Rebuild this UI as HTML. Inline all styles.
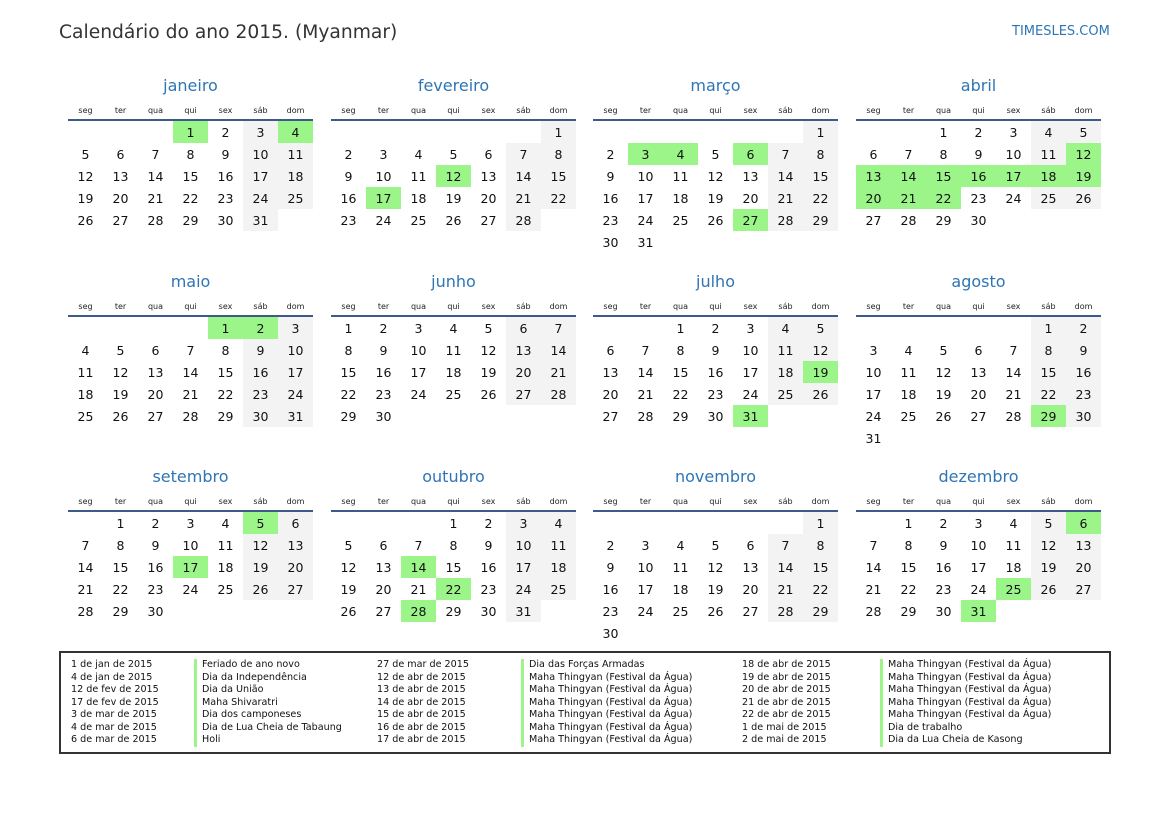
<!DOCTYPE html>
<html><head><meta charset="utf-8"><style>
body{margin:0;width:1169px;height:827px;background:#fff;font-family:"DejaVu Sans","Liberation Sans",sans-serif;position:relative;overflow:hidden;color:#111}
.t{position:absolute;left:59px;top:22px;font-size:18.7px;color:#333;white-space:nowrap}
.s{position:absolute;left:1012px;top:24px;font-size:13px;color:#2e75b6}
.m{position:absolute;width:245px}
.m h2{margin:0;height:22px;line-height:22px;font-size:16px;font-weight:normal;color:#2e75b6;text-align:center;position:absolute;top:1px;left:0;width:245px}
.m table{position:absolute;top:27px;left:0;border-collapse:collapse;table-layout:fixed;width:245px}
.m th{height:18px;font-size:8px;font-weight:normal;color:#222;padding:0;border-bottom:2px solid #3d5a8a;width:35px}
.m td{height:22px;padding:0;text-align:center;font-size:12.5px;width:35px}
.w{background:#f3f3f3}.h{background:#9cf589}
.lg{position:absolute;left:59px;top:651px;width:1048px;height:99px;border:2px solid #333}
.c{position:absolute;top:6px;font-size:9.6px;line-height:12.5px;white-space:nowrap;color:#111}
.b{border-left:3px solid #9cf589;padding-left:5px}
</style></head><body>
<div class="t">Calendário do ano 2015. (Myanmar)</div>
<div class="s">TIMESLES.COM</div>

<div class="m" style="left:68px;top:74px"><h2>janeiro</h2><table><tr><th>seg</th><th>ter</th><th>qua</th><th>qui</th><th>sex</th><th>sáb</th><th>dom</th></tr>
<tr><td></td><td></td><td></td><td class="h">1</td><td>2</td><td class="w">3</td><td class="h">4</td></tr>
<tr><td>5</td><td>6</td><td>7</td><td>8</td><td>9</td><td class="w">10</td><td class="w">11</td></tr>
<tr><td>12</td><td>13</td><td>14</td><td>15</td><td>16</td><td class="w">17</td><td class="w">18</td></tr>
<tr><td>19</td><td>20</td><td>21</td><td>22</td><td>23</td><td class="w">24</td><td class="w">25</td></tr>
<tr><td>26</td><td>27</td><td>28</td><td>29</td><td>30</td><td class="w">31</td><td></td></tr></table></div>

<div class="m" style="left:331px;top:74px"><h2>fevereiro</h2><table><tr><th>seg</th><th>ter</th><th>qua</th><th>qui</th><th>sex</th><th>sáb</th><th>dom</th></tr>
<tr><td></td><td></td><td></td><td></td><td></td><td></td><td class="w">1</td></tr>
<tr><td>2</td><td>3</td><td>4</td><td>5</td><td>6</td><td class="w">7</td><td class="w">8</td></tr>
<tr><td>9</td><td>10</td><td>11</td><td class="h">12</td><td>13</td><td class="w">14</td><td class="w">15</td></tr>
<tr><td>16</td><td class="h">17</td><td>18</td><td>19</td><td>20</td><td class="w">21</td><td class="w">22</td></tr>
<tr><td>23</td><td>24</td><td>25</td><td>26</td><td>27</td><td class="w">28</td><td></td></tr></table></div>

<div class="m" style="left:593px;top:74px"><h2>março</h2><table><tr><th>seg</th><th>ter</th><th>qua</th><th>qui</th><th>sex</th><th>sáb</th><th>dom</th></tr>
<tr><td></td><td></td><td></td><td></td><td></td><td></td><td class="w">1</td></tr>
<tr><td>2</td><td class="h">3</td><td class="h">4</td><td>5</td><td class="h">6</td><td class="w">7</td><td class="w">8</td></tr>
<tr><td>9</td><td>10</td><td>11</td><td>12</td><td>13</td><td class="w">14</td><td class="w">15</td></tr>
<tr><td>16</td><td>17</td><td>18</td><td>19</td><td>20</td><td class="w">21</td><td class="w">22</td></tr>
<tr><td>23</td><td>24</td><td>25</td><td>26</td><td class="h">27</td><td class="w">28</td><td class="w">29</td></tr>
<tr><td>30</td><td>31</td><td></td><td></td><td></td><td></td><td></td></tr></table></div>

<div class="m" style="left:856px;top:74px"><h2>abril</h2><table><tr><th>seg</th><th>ter</th><th>qua</th><th>qui</th><th>sex</th><th>sáb</th><th>dom</th></tr>
<tr><td></td><td></td><td>1</td><td>2</td><td>3</td><td class="w">4</td><td class="w">5</td></tr>
<tr><td>6</td><td>7</td><td>8</td><td>9</td><td>10</td><td class="w">11</td><td class="h">12</td></tr>
<tr><td class="h">13</td><td class="h">14</td><td class="h">15</td><td class="h">16</td><td class="h">17</td><td class="h">18</td><td class="h">19</td></tr>
<tr><td class="h">20</td><td class="h">21</td><td class="h">22</td><td>23</td><td>24</td><td class="w">25</td><td class="w">26</td></tr>
<tr><td>27</td><td>28</td><td>29</td><td>30</td><td></td><td></td><td></td></tr></table></div>

<div class="m" style="left:68px;top:270px"><h2>maio</h2><table><tr><th>seg</th><th>ter</th><th>qua</th><th>qui</th><th>sex</th><th>sáb</th><th>dom</th></tr>
<tr><td></td><td></td><td></td><td></td><td class="h">1</td><td class="h">2</td><td class="w">3</td></tr>
<tr><td>4</td><td>5</td><td>6</td><td>7</td><td>8</td><td class="w">9</td><td class="w">10</td></tr>
<tr><td>11</td><td>12</td><td>13</td><td>14</td><td>15</td><td class="w">16</td><td class="w">17</td></tr>
<tr><td>18</td><td>19</td><td>20</td><td>21</td><td>22</td><td class="w">23</td><td class="w">24</td></tr>
<tr><td>25</td><td>26</td><td>27</td><td>28</td><td>29</td><td class="w">30</td><td class="w">31</td></tr></table></div>

<div class="m" style="left:331px;top:270px"><h2>junho</h2><table><tr><th>seg</th><th>ter</th><th>qua</th><th>qui</th><th>sex</th><th>sáb</th><th>dom</th></tr>
<tr><td>1</td><td>2</td><td>3</td><td>4</td><td>5</td><td class="w">6</td><td class="w">7</td></tr>
<tr><td>8</td><td>9</td><td>10</td><td>11</td><td>12</td><td class="w">13</td><td class="w">14</td></tr>
<tr><td>15</td><td>16</td><td>17</td><td>18</td><td>19</td><td class="w">20</td><td class="w">21</td></tr>
<tr><td>22</td><td>23</td><td>24</td><td>25</td><td>26</td><td class="w">27</td><td class="w">28</td></tr>
<tr><td>29</td><td>30</td><td></td><td></td><td></td><td></td><td></td></tr></table></div>

<div class="m" style="left:593px;top:270px"><h2>julho</h2><table><tr><th>seg</th><th>ter</th><th>qua</th><th>qui</th><th>sex</th><th>sáb</th><th>dom</th></tr>
<tr><td></td><td></td><td>1</td><td>2</td><td>3</td><td class="w">4</td><td class="w">5</td></tr>
<tr><td>6</td><td>7</td><td>8</td><td>9</td><td>10</td><td class="w">11</td><td class="w">12</td></tr>
<tr><td>13</td><td>14</td><td>15</td><td>16</td><td>17</td><td class="w">18</td><td class="h">19</td></tr>
<tr><td>20</td><td>21</td><td>22</td><td>23</td><td>24</td><td class="w">25</td><td class="w">26</td></tr>
<tr><td>27</td><td>28</td><td>29</td><td>30</td><td class="h">31</td><td></td><td></td></tr></table></div>

<div class="m" style="left:856px;top:270px"><h2>agosto</h2><table><tr><th>seg</th><th>ter</th><th>qua</th><th>qui</th><th>sex</th><th>sáb</th><th>dom</th></tr>
<tr><td></td><td></td><td></td><td></td><td></td><td class="w">1</td><td class="w">2</td></tr>
<tr><td>3</td><td>4</td><td>5</td><td>6</td><td>7</td><td class="w">8</td><td class="w">9</td></tr>
<tr><td>10</td><td>11</td><td>12</td><td>13</td><td>14</td><td class="w">15</td><td class="w">16</td></tr>
<tr><td>17</td><td>18</td><td>19</td><td>20</td><td>21</td><td class="w">22</td><td class="w">23</td></tr>
<tr><td>24</td><td>25</td><td>26</td><td>27</td><td>28</td><td class="h">29</td><td class="w">30</td></tr>
<tr><td>31</td><td></td><td></td><td></td><td></td><td></td><td></td></tr></table></div>

<div class="m" style="left:68px;top:465px"><h2>setembro</h2><table><tr><th>seg</th><th>ter</th><th>qua</th><th>qui</th><th>sex</th><th>sáb</th><th>dom</th></tr>
<tr><td></td><td>1</td><td>2</td><td>3</td><td>4</td><td class="h">5</td><td class="w">6</td></tr>
<tr><td>7</td><td>8</td><td>9</td><td>10</td><td>11</td><td class="w">12</td><td class="w">13</td></tr>
<tr><td>14</td><td>15</td><td>16</td><td class="h">17</td><td>18</td><td class="w">19</td><td class="w">20</td></tr>
<tr><td>21</td><td>22</td><td>23</td><td>24</td><td>25</td><td class="w">26</td><td class="w">27</td></tr>
<tr><td>28</td><td>29</td><td>30</td><td></td><td></td><td></td><td></td></tr></table></div>

<div class="m" style="left:331px;top:465px"><h2>outubro</h2><table><tr><th>seg</th><th>ter</th><th>qua</th><th>qui</th><th>sex</th><th>sáb</th><th>dom</th></tr>
<tr><td></td><td></td><td></td><td>1</td><td>2</td><td class="w">3</td><td class="w">4</td></tr>
<tr><td>5</td><td>6</td><td>7</td><td>8</td><td>9</td><td class="w">10</td><td class="w">11</td></tr>
<tr><td>12</td><td>13</td><td class="h">14</td><td>15</td><td>16</td><td class="w">17</td><td class="w">18</td></tr>
<tr><td>19</td><td>20</td><td>21</td><td class="h">22</td><td>23</td><td class="w">24</td><td class="w">25</td></tr>
<tr><td>26</td><td>27</td><td class="h">28</td><td>29</td><td>30</td><td class="w">31</td><td></td></tr></table></div>

<div class="m" style="left:593px;top:465px"><h2>novembro</h2><table><tr><th>seg</th><th>ter</th><th>qua</th><th>qui</th><th>sex</th><th>sáb</th><th>dom</th></tr>
<tr><td></td><td></td><td></td><td></td><td></td><td></td><td class="w">1</td></tr>
<tr><td>2</td><td>3</td><td>4</td><td>5</td><td>6</td><td class="w">7</td><td class="w">8</td></tr>
<tr><td>9</td><td>10</td><td>11</td><td>12</td><td>13</td><td class="w">14</td><td class="w">15</td></tr>
<tr><td>16</td><td>17</td><td>18</td><td>19</td><td>20</td><td class="w">21</td><td class="w">22</td></tr>
<tr><td>23</td><td>24</td><td>25</td><td>26</td><td>27</td><td class="w">28</td><td class="w">29</td></tr>
<tr><td>30</td><td></td><td></td><td></td><td></td><td></td><td></td></tr></table></div>

<div class="m" style="left:856px;top:465px"><h2>dezembro</h2><table><tr><th>seg</th><th>ter</th><th>qua</th><th>qui</th><th>sex</th><th>sáb</th><th>dom</th></tr>
<tr><td></td><td>1</td><td>2</td><td>3</td><td>4</td><td class="w">5</td><td class="h">6</td></tr>
<tr><td>7</td><td>8</td><td>9</td><td>10</td><td>11</td><td class="w">12</td><td class="w">13</td></tr>
<tr><td>14</td><td>15</td><td>16</td><td>17</td><td>18</td><td class="w">19</td><td class="w">20</td></tr>
<tr><td>21</td><td>22</td><td>23</td><td>24</td><td class="h">25</td><td class="w">26</td><td class="w">27</td></tr>
<tr><td>28</td><td>29</td><td>30</td><td class="h">31</td><td></td><td></td><td></td></tr></table></div>

<div class="lg">
<div class="c" style="left:10px">1 de jan de 2015<br>4 de jan de 2015<br>12 de fev de 2015<br>17 de fev de 2015<br>3 de mar de 2015<br>4 de mar de 2015<br>6 de mar de 2015</div>
<div class="c b" style="left:133px">Feriado de ano novo<br>Dia da Independência<br>Dia da União<br>Maha Shivaratri<br>Dia dos camponeses<br>Dia de Lua Cheia de Tabaung<br>Holi</div>
<div class="c" style="left:316px">27 de mar de 2015<br>12 de abr de 2015<br>13 de abr de 2015<br>14 de abr de 2015<br>15 de abr de 2015<br>16 de abr de 2015<br>17 de abr de 2015</div>
<div class="c b" style="left:460px">Dia das Forças Armadas<br>Maha Thingyan (Festival da Água)<br>Maha Thingyan (Festival da Água)<br>Maha Thingyan (Festival da Água)<br>Maha Thingyan (Festival da Água)<br>Maha Thingyan (Festival da Água)<br>Maha Thingyan (Festival da Água)</div>
<div class="c" style="left:681px">18 de abr de 2015<br>19 de abr de 2015<br>20 de abr de 2015<br>21 de abr de 2015<br>22 de abr de 2015<br>1 de mai de 2015<br>2 de mai de 2015</div>
<div class="c b" style="left:819px">Maha Thingyan (Festival da Água)<br>Maha Thingyan (Festival da Água)<br>Maha Thingyan (Festival da Água)<br>Maha Thingyan (Festival da Água)<br>Maha Thingyan (Festival da Água)<br>Dia de trabalho<br>Dia da Lua Cheia de Kasong</div>
</div>
</body></html>
